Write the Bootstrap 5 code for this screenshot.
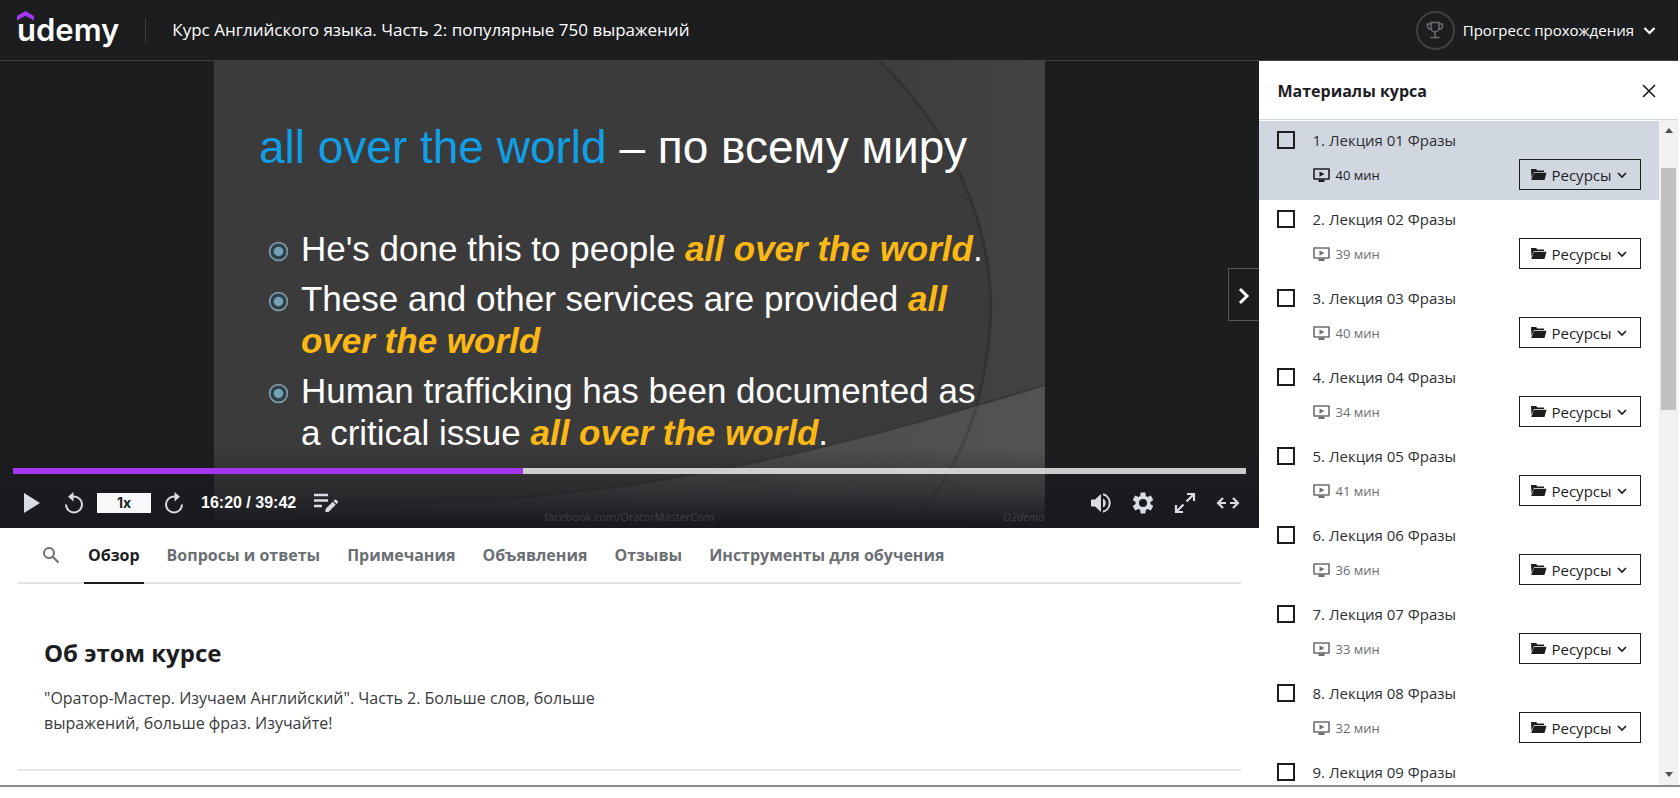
<!DOCTYPE html>
<html lang="ru">
<head>
<meta charset="utf-8">
<meta name="viewport" content="width=device-width, initial-scale=1">
<title>Курс Английского языка. Часть 2: популярные 750 выражений</title>
<link href="https://cdn.jsdelivr.net/npm/bootstrap@5.3.0/dist/css/bootstrap.min.css" rel="stylesheet">
<style>
  body { font-family: "Open Sans", "Noto Sans", sans-serif; color: #1c1d1f; background: #fff; font-size: 16px; }
  button { color: inherit; }
  .icon-button { border: 0; background: none; padding: 0; line-height: 0; }
  .shell { height: calc(100vh - 11px); padding-right: 2px; border-bottom: 2px solid #8a8b8d; }

  .topbar { height: 61px; background: #1c1d1f; border-bottom: 1px solid #3e4143; color: #fff; padding: 0 21px 0 17px; }
  .logo { font-family: Inter, sans-serif; font-weight: 600; font-size: 31px; line-height: 36px; color: #fff; }
  .logo svg { top: -1px; left: 0; }
  .rule { width: 1px; height: 24px; background: #3e4143; margin: 0 26px; }
  .course-name { font-size: 17px; }
  .trophy { width: 39px; height: 39px; border: 2px solid #3e4143; border-radius: 50%; color: #6a6f73; }
  .progress-name { font-size: 15px; }

  .stage { background: #1c1d1f; }
  .slide { width: 66%; aspect-ratio: 16 / 9; background: #3b3b3b; font-family: "Liberation Sans", Arial, sans-serif; color: #fff; padding: 58px 45px 0; }
  .slide-title { font-size: 46px; line-height: 56px; font-weight: 400; margin: 0 0 53px; }
  .slide-title span { color: #109fe6; }
  .points { list-style: none; margin: 0; padding: 0; font-size: 35px; line-height: 42px; }
  .points li { display: flex; gap: 12px; margin-bottom: 8px; padding-left: 9px; }
  .points svg { flex: none; margin-top: 13px; }
  .points em { font-weight: 700; color: #fdb813; }
  .credit { bottom: 3px; font-size: 11px; line-height: 16px; color: #3f4144; }
  .credit-mark { right: 17%; }
  .controls { left: 0; right: 0; bottom: 0; padding: 20px 13px 0; color: #d9dce3; background: linear-gradient(rgba(24,26,31,0), rgba(24,26,31,.5) 55%, #181a1f 96%); }
  .seek { appearance: none; -webkit-appearance: none; display: block; width: 100%; height: 6px; margin: 0; background: linear-gradient(90deg, #a435f0 41.4%, rgba(240,240,242,.82) 41.4%); }
  .seek::-webkit-slider-thumb { -webkit-appearance: none; width: 0; height: 0; }
  .control-row { height: 54px; padding: 4px 6px 0 8px; }
  .control-left { gap: 12px; }
  .control-right { gap: 20px; }
  .speed { width: 54px; height: 20px; border: 0; background: #f7f9fa; color: #1c1d1f; font: 700 14px/20px Inter, sans-serif; padding: 0; }
  .clock { font: 700 16px/20px "Liberation Sans", Arial, sans-serif; color: #fff; margin: 0 6px 0 4px; }
  .next { right: 0; top: 207px; width: 31px; height: 53px; background: #1c1d1f; border: 1px solid #55585b; border-right: 0; color: #fff; padding: 0; }

  .tabs { margin: 0 18px; border-bottom: 2px solid #e4e5e7; padding-left: 24px; height: 56px; }
  .tabs a { color: #6a6f73; font-weight: 700; font-size: 16px; line-height: 24px; padding: 15px 4px 0; text-decoration: none; margin-right: 19px; }
  .tabs a.active { color: #1c1d1f; border-bottom: 2px solid #1c1d1f; margin-bottom: -2px; }
  .tabs .icon-button { margin-right: 24px; color: #6a6f73; }
  .about { margin: 0 18px; padding: 51px 26px 33px; border-bottom: 2px solid #e4e5e7; }
  .about h1 { font-size: 24px; line-height: 36px; font-weight: 700; margin: 0 0 15px; }
  .about p { font-size: 16px; line-height: 25px; margin: 0; max-width: 600px; color: #3a3b3d; }

  .sidebar { width: 25%; flex: none; background: #fff; }
  .sidebar-head { height: 59px; padding: 2px 22px 0 19px; border-bottom: 1px solid #d1d7dc; }
  .sidebar-head h2 { font-size: 16px; line-height: 24px; font-weight: 700; margin: 0; }
  .lessons { list-style: none; margin: 0; padding: 1px 0 0; }
  .lesson { height: 79px; padding: 8px 18px 0; color: #6a6f73; }
  .lesson.current { background: #d1d7e0; color: #1c1d1f; }
  .lesson input { appearance: none; -webkit-appearance: none; width: 18px; height: 18px; border: 2px solid #1c1d1f; margin: 2px 18px 0 0; flex: none; }
  .lesson label { font-size: 15px; line-height: 22px; color: #2d2f31; }
  .length { font-size: 13px; line-height: 20px; gap: 6px; }
  .files { width: 122px; height: 31px; background: none; border: 1px solid #1c1d1f; color: #1c1d1f; font-size: 15px; line-height: 20px; padding: 0 12px 0 10px; }
  .scroller { width: 19px; flex: none; background: #f1f1f1; color: #505050; padding: 8px 0; }
  .scroller .thumb { width: 15px; height: 242px; background: #c1c1c1; margin-top: 35px; }
</style>
</head>
<body>
<svg class="d-none" xmlns="http://www.w3.org/2000/svg">
  <symbol id="chevron" viewBox="0 0 12 12"><path d="M2 4l4 4 4-4" fill="none" stroke="currentColor" stroke-width="1.700"/></symbol>
  <symbol id="screen" viewBox="0 0 17 14"><path d="M1 1h15v10H1z" fill="none" stroke="currentColor" stroke-width="1.600" stroke-linejoin="round"/><path d="M6.500 3.500l5 2.600-5 2.600zM5.500 11.500h6V14h-6z" fill="currentColor"/></symbol>
  <symbol id="folder" viewBox="0 0 17 13"><path d="M1 1h5l1.500 1.500H14V4H4L1.500 10z" fill="currentColor"/><path d="M4 4.800h12.500L14.500 12H1.200z" fill="currentColor"/></symbol>
  <symbol id="bullet" viewBox="0 0 22 22"><circle cx="11" cy="11" r="9.300" fill="none" stroke="#7b99a6" stroke-width="1.800"/><circle cx="11" cy="11" r="7.500" fill="#2c4350"/><circle cx="11" cy="11" r="5" fill="#74a3b5"/></symbol>
</svg>

<div class="shell d-flex flex-column overflow-hidden">
  <header class="topbar d-flex align-items-center flex-shrink-0">
    <a class="logo position-relative text-decoration-none" href="#">udemy<svg class="position-absolute" width="17" height="10" viewBox="0 0 17 10"><path d="M8.500 0L17 5v4.500L8.500 4.700 0 9.500V5z" fill="#a435f0"/></svg></a>
    <div class="rule"></div>
    <a class="course-name text-white text-decoration-none" href="#">Курс Английского языка. Часть 2: популярные 750 выражений</a>
    <button class="icon-button d-flex align-items-center ms-auto">
      <span class="trophy d-flex align-items-center justify-content-center me-2">
        <svg width="18" height="18" viewBox="0 0 18 18" fill="none" stroke="currentColor" stroke-width="1.500"><path d="M5 1.500h8V7a4 4 0 0 1-8 0zM5 3H1.500v2A3 3 0 0 0 5 8M13 3h3.500v2A3 3 0 0 1 13 8M9 11v5M4.500 16.500h9"/></svg>
      </span>
      <span class="progress-name lh-base me-2">Прогресс прохождения</span>
      <svg width="15" height="15"><use href="#chevron"/></svg>
    </button>
  </header>

  <div class="d-flex flex-grow-1" style="min-height:0">
    <main class="flex-grow-1">
      <section class="stage position-relative">
        <div class="slide position-relative mx-auto">
          <svg class="position-absolute top-0 start-0 w-100 h-100" viewBox="0 0 831 467" preserveAspectRatio="none">
            <defs>
              <linearGradient id="side" x1="0" x2="1" y1="0" y2="0"><stop offset="0" stop-color="#3d3d3d"/><stop offset="1" stop-color="#434343"/></linearGradient>
              <linearGradient id="floor" x1="0" x2="1" y1="0" y2="0"><stop offset="0" stop-color="#3d3d3d"/><stop offset="1" stop-color="#535353"/></linearGradient>
            </defs>
            <path d="M665 0C735 65 777 160 777 245C777 335 745 410 695 467H831V0z" fill="url(#side)"/>
            <path d="M0 438C300 455 500 425 831 324V467H0z" fill="url(#floor)"/>
            <path d="M0 438C300 455 500 425 831 324" fill="none" stroke="#363636" stroke-width="2"/>
            <path d="M665 0C735 65 777 160 777 245C777 280 772 310 763 345" fill="none" stroke="#323232" stroke-width="3"/>
            <path d="M763 345C750 390 727 430 695 467" fill="none" stroke="#454545" stroke-width="3"/>
          </svg>
          <div class="position-relative">
            <h2 class="slide-title text-nowrap"><span>all over the world</span> – по всему миру</h2>
            <ul class="points text-nowrap">
              <li><svg width="21" height="21"><use href="#bullet"/></svg><div>He's done this to people <em>all over the world</em>.</div></li>
              <li><svg width="21" height="21"><use href="#bullet"/></svg><div>These and other services are provided <em>all<br>over the world</em></div></li>
              <li><svg width="21" height="21"><use href="#bullet"/></svg><div>Human trafficking has been documented as<br>a critical issue <em>all over the world</em>.</div></li>
            </ul>
          </div>
        </div>
        <div class="controls position-absolute">
          <input class="seek" type="range" min="0" max="2382" value="980" aria-label="Позиция воспроизведения">
          <div class="control-row d-flex align-items-center justify-content-between">
            <div class="control-left d-flex align-items-center">
              <button class="icon-button me-2" aria-label="Смотреть"><svg width="22" height="22" viewBox="0 0 22 22"><path d="M3 1l16 10L3 21z" fill="currentColor"/></svg></button>
              <button class="icon-button" aria-label="Назад"><svg width="22" height="22" viewBox="0 0 22 22"><path d="M3 12.500a8 8 0 1 0 8-8h-2" fill="none" stroke="currentColor" stroke-width="2"/><path d="M10.500 0v9.500L5 4.700z" fill="currentColor"/></svg></button>
              <button class="speed" aria-label="Скорость">1x</button>
              <button class="icon-button" aria-label="Вперед"><svg width="22" height="22" viewBox="0 0 22 22"><path d="M19 12.500a8 8 0 1 1-8-8h2" fill="none" stroke="currentColor" stroke-width="2"/><path d="M11.500 0v9.500L17 4.700z" fill="currentColor"/></svg></button>
              <span class="clock">16:20 / 39:42</span>
              <button class="icon-button" aria-label="Добавить примечание"><svg width="24" height="22" viewBox="0 0 24 22"><path d="M0 3h14M0 8.500h14M0 14h8" stroke="currentColor" stroke-width="2.600"/><path d="M11.500 17l7.200-7.200 3 3-7.200 7.200h-3zM19.500 9l1.200-1.200q.8-.6 1.600 0l1.400 1.400q.6.800 0 1.600l-1.200 1.200z" fill="currentColor"/></svg></button>
            </div>
            <div class="control-right d-flex">
              <button class="icon-button" aria-label="Громкость"><svg width="22" height="22" viewBox="0 0 22 22"><path d="M1 7.500h4l6-5.500v18l-6-5.500H1z" fill="currentColor"/><path d="M13 6.500a5 5 0 0 1 0 9z" fill="currentColor"/><path d="M13 2.300a9 9 0 0 1 0 17.400" fill="none" stroke="currentColor" stroke-width="2"/></svg></button>
              <button class="icon-button" aria-label="Настройки"><svg width="22" height="22" viewBox="1 1 22 22"><path fill="currentColor" d="M19.400 13a7.500 7.500 0 0 0 0-2l2.900-2-2.500-4.400-3.200 1.300-1.800-1L14.400 1.500H9.600L9.200 4.900l-1.800 1-3.200-1.300L1.700 9l2.900 2a7.500 7.500 0 0 0 0 2l-2.900 2 2.500 4.400 3.200-1.300 1.800 1 .4 3.400h4.800l.4-3.400 1.800-1 3.200 1.300 2.500-4.400zM12 16a4 4 0 1 1 0-8 4 4 0 0 1 0 8z"/></svg></button>
              <button class="icon-button" aria-label="Во весь экран"><svg width="22" height="22" viewBox="0 0 22 22" fill="none" stroke="currentColor" stroke-width="2.200"><path d="M13 2h7v7M20 2l-7.500 7.500M9 20H2v-7M2 20l7.500-7.500"/></svg></button>
              <button class="icon-button" aria-label="Широкий вид"><svg width="24" height="22" viewBox="0 0 24 22" fill="none" stroke="currentColor" stroke-width="2.200"><path d="M7 6l-5 5 5 5M2 11h8M17 6l5 5-5 5M22 11h-8"/></svg></button>
            </div>
          </div>
          <div class="credit position-absolute start-0 end-0 text-center">facebook.com/OratorMasterCom</div>
          <div class="credit credit-mark position-absolute fst-italic">O2demo</div>
        </div>
        <button class="next position-absolute" aria-label="Следующая лекция"><svg width="14" height="20" viewBox="0 0 14 20"><path d="M3 3l7 7-7 7" fill="none" stroke="currentColor" stroke-width="3"/></svg></button>
      </section>

      <nav class="tabs d-flex">
        <button class="icon-button" aria-label="Поиск"><svg width="18" height="18" viewBox="0 0 18 18" fill="none" stroke="currentColor" stroke-width="2"><circle cx="7" cy="7" r="5"/><path d="M10.700 10.700L16.500 16.500"/></svg></button>
        <a class="active" href="#">Обзор</a>
        <a href="#">Вопросы и ответы</a>
        <a href="#">Примечания</a>
        <a href="#">Объявления</a>
        <a href="#">Отзывы</a>
        <a href="#">Инструменты для обучения</a>
      </nav>
      <section class="about">
        <h1>Об этом курсе</h1>
        <p>"Оратор-Мастер. Изучаем Английский". Часть 2. Больше слов, больше выражений, больше фраз. Изучайте!</p>
      </section>
    </main>

    <aside class="sidebar d-flex flex-column">
      <div class="sidebar-head d-flex align-items-center justify-content-between flex-shrink-0">
        <h2>Материалы курса</h2>
        <button class="icon-button" aria-label="Закрыть"><svg width="14" height="14" viewBox="0 0 14 14"><path d="M1 1l12 12M13 1L1 13" stroke="currentColor" stroke-width="1.600"/></svg></button>
      </div>
      <div class="d-flex flex-grow-1" style="min-height:0">
        <ul class="lessons flex-grow-1 overflow-hidden" id="lessons"></ul>
        <div class="scroller d-flex flex-column align-items-center">
          <svg width="8" height="5" viewBox="0 0 8 5"><path d="M0 5l4-5 4 5z" fill="currentColor"/></svg>
          <div class="thumb"></div>
          <svg class="mt-auto" width="8" height="5" viewBox="0 0 8 5"><path d="M0 0l4 5 4-5z" fill="currentColor"/></svg>
        </div>
      </div>
    </aside>
  </div>
</div>

<script>
  const minutes = [40, 39, 40, 34, 41, 36, 33, 32];
  const row = (n, details) => `
    <li class="lesson d-flex align-items-start ${n === 1 ? 'current' : ''}">
      <input type="checkbox" id="lesson${n}">
      <div class="flex-grow-1">
        <label class="d-block" for="lesson${n}">${n}. Лекция 0${n} Фразы</label>
        ${details}
      </div>
    </li>`;
  document.getElementById('lessons').innerHTML = minutes.map((m, i) => row(i + 1, `
        <div class="d-flex align-items-center justify-content-between mt-2">
          <span class="length d-flex align-items-center"><svg width="17" height="14"><use href="#screen"/></svg>${m} мин</span>
          <button class="files d-flex align-items-center justify-content-between"><svg width="17" height="13"><use href="#folder"/></svg>Ресурсы<svg width="12" height="12"><use href="#chevron"/></svg></button>
        </div>`)).join('') + row(9, '');
</script>
<script src="https://cdn.jsdelivr.net/npm/bootstrap@5.3.0/dist/js/bootstrap.bundle.min.js"></script>
</body>
</html>
